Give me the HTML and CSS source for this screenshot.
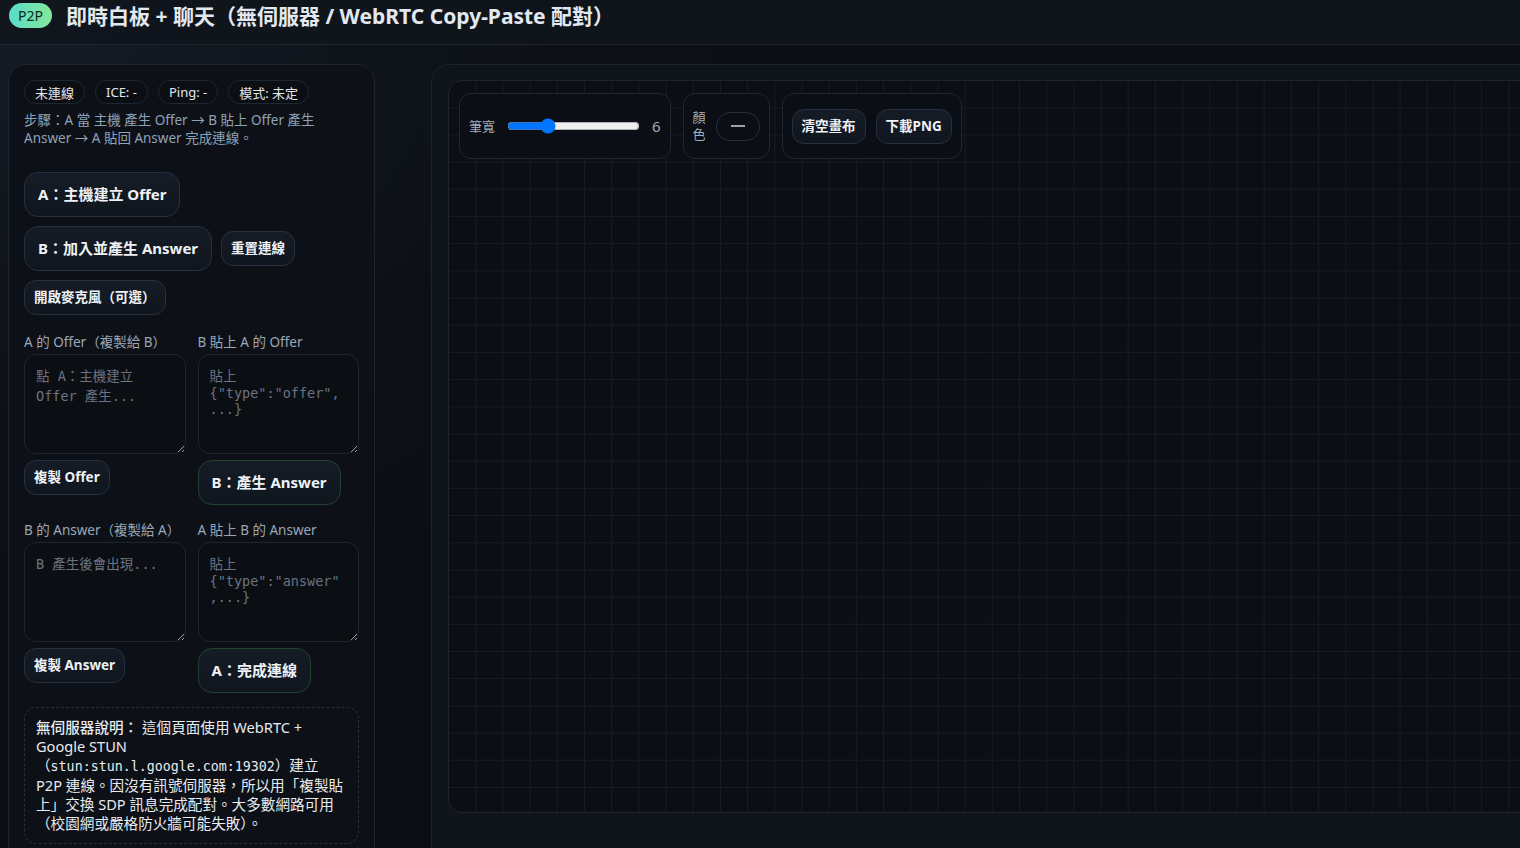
FILE: index.html
```html
<!DOCTYPE html>
<html lang="zh-Hant">
<head>
<meta charset="utf-8">
<title>即時白板 + 聊天</title>
<link rel="stylesheet" href="styles.css">
</head>
<body>
<header class="topbar">
  <span class="badge">P2P</span>
  <h1 class="title">即時白板 + 聊天（無伺服器 / WebRTC Copy-Paste 配對）</h1>
</header>
<main class="layout">
  <aside class="panel side">
    <div class="pills">
      <span class="pill">未連線</span>
      <span class="pill">ICE: -</span>
      <span class="pill">Ping: -</span>
      <span class="pill">模式: 未定</span>
    </div>
    <p class="steps">步驟：A 當 主機 產生 Offer → B 貼上 Offer 產生 Answer → A 貼回 Answer 完成連線。</p>
    <div class="actions">
      <button class="btn btn-lg">A：主機建立 Offer</button>
      <button class="btn btn-lg">B：加入並產生 Answer</button>
      <button class="btn btn-sm">重置連線</button>
      <button class="btn btn-sm">開啟麥克風（可選）</button>
    </div>
    <div class="pairs">
      <div class="field">
        <label class="field-label">A 的 Offer（複製給 B）</label>
        <textarea class="sdp" placeholder="點 A：主機建立 Offer 產生..."></textarea>
        <div class="field-btn"><button class="btn btn-sm">複製 Offer</button></div>
      </div>
      <div class="field">
        <label class="field-label">B 貼上 A 的 Offer</label>
        <textarea class="sdp" placeholder='貼上 {"type":"offer", ...}'></textarea>
        <div class="field-btn"><button class="btn btn-lg btn-go">B：產生 Answer</button></div>
      </div>
      <div class="field">
        <label class="field-label">B 的 Answer（複製給 A）</label>
        <textarea class="sdp" placeholder="B 產生後會出現..."></textarea>
        <div class="field-btn"><button class="btn btn-sm">複製 Answer</button></div>
      </div>
      <div class="field">
        <label class="field-label">A 貼上 B 的 Answer</label>
        <textarea class="sdp" placeholder='貼上 {"type":"answer",...}'></textarea>
        <div class="field-btn"><button class="btn btn-lg btn-go">A：完成連線</button></div>
      </div>
    </div>
    <div class="note">
      <b>無伺服器說明：</b> 這個頁面使用 WebRTC + Google STUN（<code>stun:stun.l.google.com:19302</code>）建立 P2P 連線。因沒有訊號伺服器，所以用「複製貼上」交換 SDP 訊息完成配對。大多數網路可用（校園網或嚴格防火牆可能失敗）。
    </div>
  </aside>
  <section class="panel board">
    <div class="canvas-wrap">
      <div class="toolbar">
        <div class="tool-group">
          <span class="tool-label">筆寬</span>
          <input class="range" type="range" min="1" max="19" value="6">
          <span class="tool-value">6</span>
        </div>
        <div class="tool-group">
          <span class="tool-label narrow">顏色</span>
          <span class="swatch"><span class="swatch-line"></span></span>
        </div>
        <div class="tool-group">
          <button class="btn btn-sm">清空畫布</button>
          <button class="btn btn-sm">下載PNG</button>
        </div>
      </div>
    </div>
  </section>
</main>
</body>
</html>
```

FILE: styles.css
```css
* { box-sizing: border-box; }
html, body { margin: 0; padding: 0; }
body {
  overflow: hidden;
  background: radial-gradient(ellipse 900px 700px at 0 0, #151c26 0%, #0d1117 60%, #0a0d11 100%);
  background-color: #0a0d11;
  color: #e5e7eb;
  font-family: "Noto Sans", "Noto Sans CJK TC", sans-serif;
  font-size: 14px;
}
.topbar {
  display: flex;
  align-items: center;
  gap: 14px;
  height: 45px;
  padding: 0 9px 14px;
  background: rgba(16, 21, 28, 0.85);
  border-bottom: 1px solid #1e2530;
}
.badge {
  display: inline-flex;
  align-items: center;
  justify-content: center;
  height: 25px;
  width: 43px;
  border-radius: 13px;
  background: linear-gradient(90deg, #59dcc9, #84e89a);
  color: #0c2a22;
  font-size: 14px;
  font-family: "Noto Sans", sans-serif;
}
.title {
  margin: 0;
  font-size: 21px;
  font-weight: 700;
  color: #e2e8f0;
  letter-spacing: 0;
}
.layout {
  display: grid;
  grid-template-columns: 367px 1300px;
  column-gap: 56px;
  padding: 19px 8px 0;
  align-items: start;
}
.panel {
  border: 1px solid #1c2430;
  border-radius: 18px;
}
.side {
  background: #0d1117;
  padding: 15px 15px 20px;
}
.board {
  background: #10151c;
  padding: 15px 16px;
  min-height: 860px;
}
.pills {
  display: flex;
  gap: 10px;
  margin-bottom: 7px;
}
.pill {
  height: 24px;
  padding: 0 10px;
  display: inline-flex;
  align-items: center;
  border: 1px solid #1f2733;
  border-radius: 12px;
  background: #0b0f14;
  font-size: 13px;
  color: #e5e7eb;
}
.steps {
  margin: 0;
  font-size: 13.5px;
  line-height: 18px;
  color: #8ea2b8;
}
.actions {
  margin-top: 25px;
  display: flex;
  flex-wrap: wrap;
  align-items: center;
  gap: 9px;
}
.btn {
  font-family: "Noto Sans", "Noto Sans CJK TC", sans-serif;
  font-weight: 700;
  color: #eef2f6;
  background: linear-gradient(180deg, #151c26, #10161e);
  border: 1px solid #263040;
  cursor: pointer;
}
.btn-lg {
  font-size: 15px;
  line-height: 19px;
  padding: 12px 13px;
  border-radius: 14px;
}
.btn-sm {
  font-size: 13.5px;
  line-height: 17px;
  padding: 8px 9px;
  border-radius: 12px;
}
.btn-go { border-color: #24402f; }
.pairs {
  margin-top: 18px;
  display: grid;
  grid-template-columns: 1fr 1fr;
  column-gap: 12px;
  row-gap: 16px;
}
.field { display: flex; flex-direction: column; }
.field-label {
  font-size: 13.5px;
  line-height: 18px;
  margin-bottom: 3px;
  color: #9aa7b6;
}
.sdp {
  display: block;
  width: 100%;
  height: 100px;
  padding: 10px 11px;
  border: 1px solid #1d2530;
  border-radius: 12px;
  background: #0b0f14;
  color: #d1d5db;
  font-family: "DejaVu Sans Mono", "Noto Sans CJK TC", monospace;
  font-size: 13.5px;
  resize: vertical;
}
.sdp::placeholder { color: #6b7280; }
.field-btn { margin-top: 6px; display: flex; }
.note {
  margin-top: 14px;
  border: 1px dashed #263040;
  border-radius: 12px;
  padding: 10px 11px;
  font-size: 14.6px;
  line-height: 19px;
  color: #e8ebef;
}
.note b { font-weight: 500; }
.note code {
  font-family: "DejaVu Sans Mono", monospace;
  font-size: 13.3px;
}
.canvas-wrap {
  position: relative;
  height: 733px;
  border: 1px solid #1c2430;
  border-radius: 14px;
  background-color: #0b0f15;
  background-image:
    linear-gradient(90deg, transparent calc(100% - 1px), #171c22 0),
    linear-gradient(180deg, transparent calc(100% - 1px), #171c22 0);
  background-size: 27.2px 27.2px;
}
.toolbar {
  position: absolute;
  top: 12px;
  left: 10px;
  display: flex;
  gap: 12px;
}
.tool-group {
  height: 66px;
  display: flex;
  align-items: center;
  gap: 10px;
  padding: 0 9px;
  border: 1px solid #1f2733;
  border-radius: 12px;
  background: #0b0f15;
}
.tool-label {
  font-size: 13px;
  line-height: 17px;
  color: #a3adb9;
}
.tool-label.narrow { width: 13px; }
.range {
  width: 133px;
  margin: 0 2px;
}
.tool-value {
  font-size: 15px;
  color: #a3adb9;
  font-family: "Noto Sans", sans-serif;
}
.swatch {
  width: 44px;
  height: 29px;
  border: 1px solid #27303c;
  border-radius: 14px;
  display: flex;
  align-items: center;
  justify-content: center;
}
.swatch-line {
  width: 14px;
  height: 2px;
  background: #9ca3af;
}
```
